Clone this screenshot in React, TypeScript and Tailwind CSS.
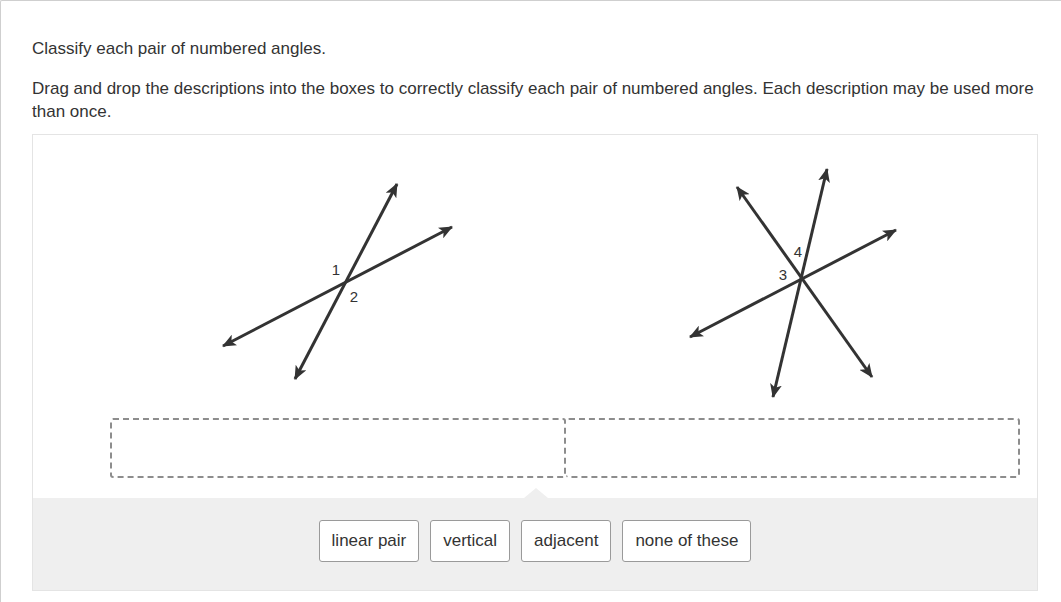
import React from "react";

function Arrow({ x1, y1, x2, y2 }: { x1: number; y1: number; x2: number; y2: number }) {
  return (
    <line
      x1={x1}
      y1={y1}
      x2={x2}
      y2={y2}
      stroke="#333"
      strokeWidth={3}
      markerStart="url(#ah)"
      markerEnd="url(#ah)"
    />
  );
}

function Defs() {
  return (
    <defs>
      <marker
        id="ah"
        viewBox="0 0 14 12"
        refX="13"
        refY="6"
        markerWidth="14"
        markerHeight="12"
        markerUnits="userSpaceOnUse"
        orient="auto-start-reverse"
      >
        <path d="M0,0 L14,6 L0,12 L3.5,6 Z" fill="#333" />
      </marker>
    </defs>
  );
}

const labelStyle = { fontFamily: '"Liberation Sans", Arial, sans-serif', fontSize: 15, fill: "#333" } as const;

export default function App() {
  const buttons = ["linear pair", "vertical", "adjacent", "none of these"];
  return (
    <div
      className="min-h-[602px] w-[1061px] border-l border-t border-[#cfcfcf] rounded-tl-[2px] bg-white text-[#333] pl-[31px] pr-[23px] pt-[36px]"
      style={{ fontFamily: '"Liberation Sans", Arial, sans-serif' }}
    >
      <p className="text-[17px] leading-[23px]">Classify each pair of numbered angles.</p>
      <p className="mt-[17px] text-[17px] leading-[23px]">
        Drag and drop the descriptions into the boxes to correctly classify each pair of numbered angles. Each
        description may be used more than once.
      </p>
      <div className="mt-[11px] w-[1006px] border border-[#e4e4e4]">
        <div className="bg-white pt-[15px] pb-[20px] pl-[77px] pr-[17px]">
          <div className="grid grid-cols-[455px_454px]">
            <svg width="455" height="260" viewBox="0 0 455 260">
              <Defs />
              <Arrow x1={113} y1={196} x2={342} y2={77} />
              <Arrow x1={185} y1={229} x2={287} y2={34} />
              <text x={226} y={125} textAnchor="middle" style={labelStyle}>1</text>
              <text x={244} y={152} textAnchor="middle" style={labelStyle}>2</text>
            </svg>
            <svg width="454" height="260" viewBox="0 0 454 260">
              <Defs />
              <Arrow x1={125} y1={187} x2={331} y2={80} />
              <Arrow x1={208} y1={247} x2={262} y2={19} />
              <Arrow x1={172} y1={37} x2={307} y2={227} />
              <text x={233} y={107} textAnchor="middle" style={labelStyle}>4</text>
              <text x={218} y={130} textAnchor="middle" style={labelStyle}>3</text>
            </svg>
          </div>
          <div className="mt-[8px] flex">
            <div className="h-[60px] w-[456px] rounded-[3px] border-2 border-dashed border-[#8d8d8d]" />
            <div className="h-[60px] w-[454px] rounded-[3px] border-2 border-l-0 border-dashed border-[#8d8d8d]" />
          </div>
        </div>
        <div className="relative bg-[#efefef] pt-[22px] pb-[28px]">
          <div className="absolute left-[491px] top-[-10px] h-0 w-0 border-x-[12px] border-b-[10px] border-x-transparent border-b-[#efefef]" />
          <div className="flex justify-center gap-[11px]">
            {buttons.map((b) => (
              <div
                key={b}
                className="flex h-[42px] items-center rounded-[3px] border border-[#9a9a9a] bg-white px-[12px] text-[17px] text-[#333]"
              >
                {b}
              </div>
            ))}
          </div>
        </div>
      </div>
    </div>
  );
}
